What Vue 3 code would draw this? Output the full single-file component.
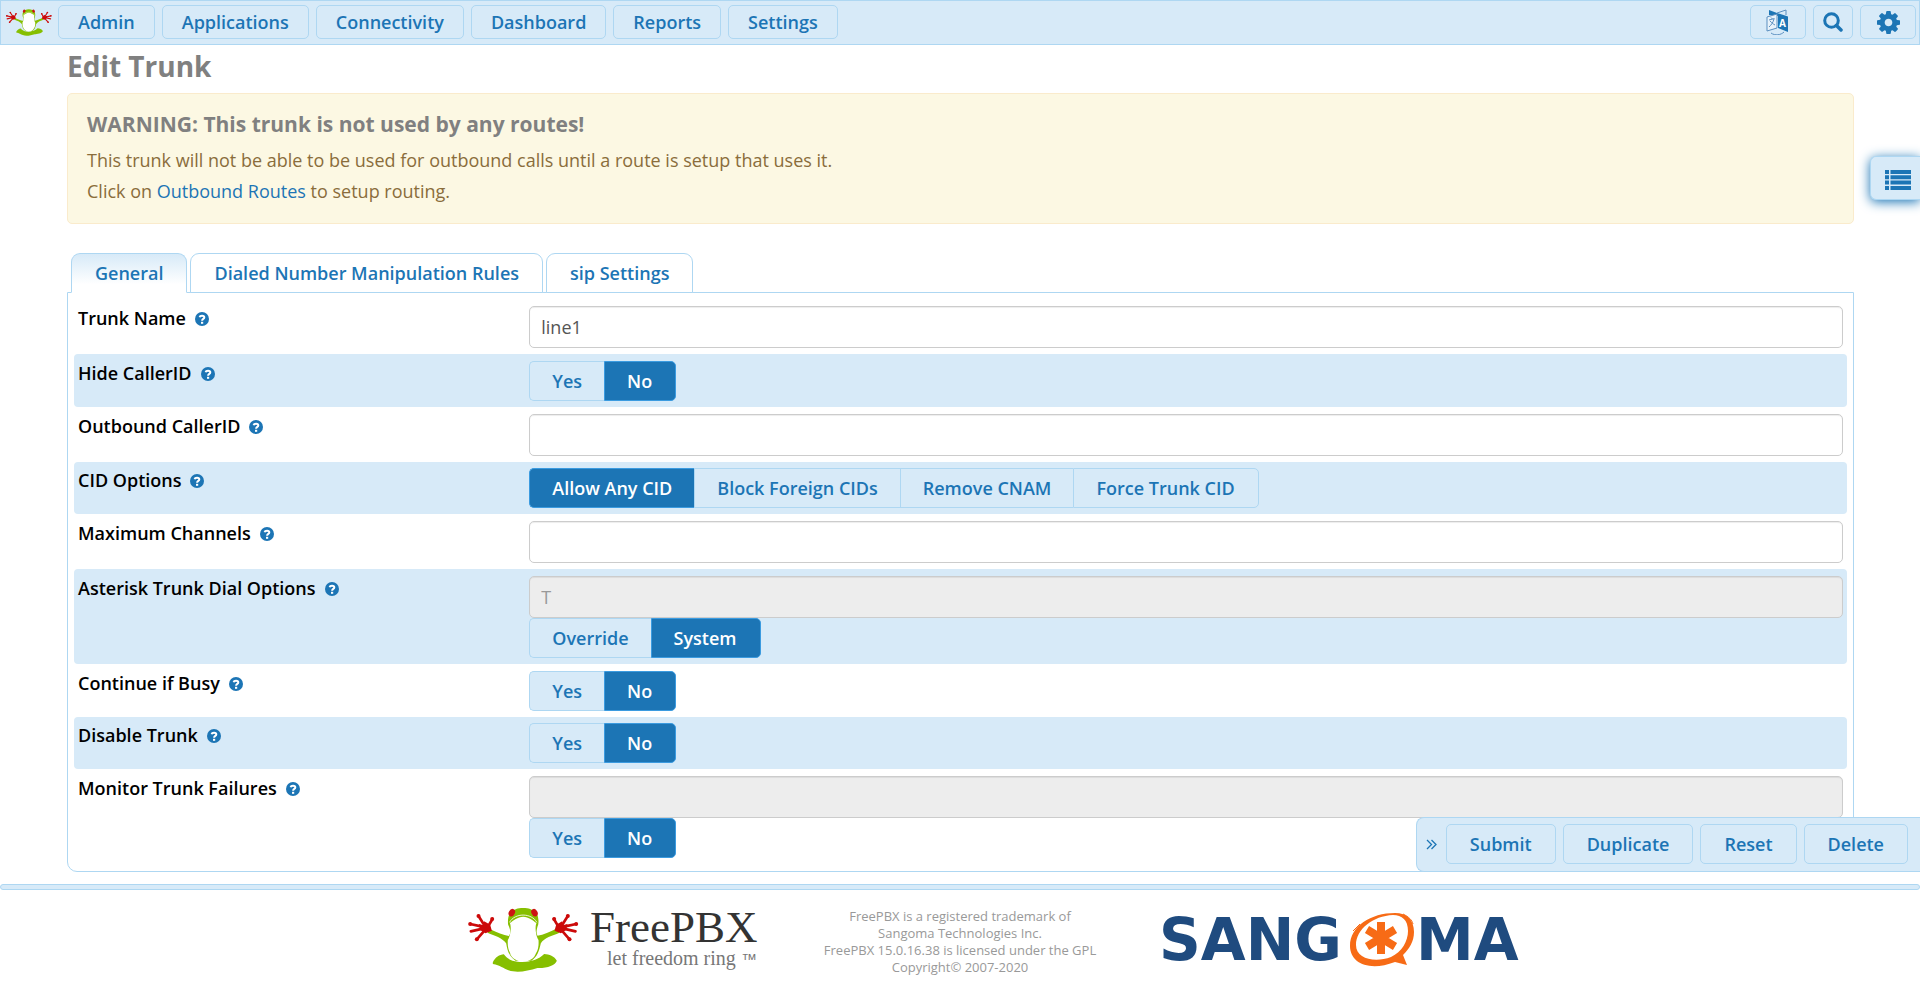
<script setup>
import { reactive, ref } from 'vue'

const menus = ['Admin', 'Applications', 'Connectivity', 'Dashboard', 'Reports', 'Settings']
const tabs = ['General', 'Dialed Number Manipulation Rules', 'sip Settings']
const activeTab = ref('General')
const actions = ['Submit', 'Duplicate', 'Reset', 'Delete']

const rows = reactive([
  { id: 'trunk-name', label: 'Trunk Name', text: 'line1' },
  { id: 'hide-cid', label: 'Hide CallerID', options: ['Yes', 'No'], choice: 'No' },
  { id: 'outbound-cid', label: 'Outbound CallerID', text: '' },
  {
    id: 'cid-options',
    label: 'CID Options',
    options: ['Allow Any CID', 'Block Foreign CIDs', 'Remove CNAM', 'Force Trunk CID'],
    choice: 'Allow Any CID'
  },
  { id: 'max-channels', label: 'Maximum Channels', text: '' },
  {
    id: 'dial-options',
    label: 'Asterisk Trunk Dial Options',
    text: 'T',
    disabled: true,
    options: ['Override', 'System'],
    choice: 'System'
  },
  { id: 'continue-busy', label: 'Continue if Busy', options: ['Yes', 'No'], choice: 'No' },
  { id: 'disable-trunk', label: 'Disable Trunk', options: ['Yes', 'No'], choice: 'No' },
  {
    id: 'monitor-failures',
    label: 'Monitor Trunk Failures',
    text: '',
    disabled: true,
    options: ['Yes', 'No'],
    choice: 'No'
  }
])
</script>

<template>
  <svg class="defs" aria-hidden="true">
    <symbol id="frog" viewBox="54 54 332 192">
      <path fill="#86bf00" d="M128 217C135 202 148 194 161 193C170 206 185 213 202 215C232 219 264 210 282 192C297 193 313 199 320 212C316 226 290 235 262 234C232 243 202 250 175 241C160 235 150 226 128 222Z" />
      <path fill="#86bf00" d="M174 104C171 85 178 57 194 59C206 52 232 52 244 59C260 57 268 85 264 104C258 120 258 130 262 137C280 134 300 125 318 116L328 128C305 138 283 142 272 160C266 185 262 200 244 212L196 212C178 200 172 185 168 160C155 142 135 138 112 128L120 118C140 128 160 136 176 138C182 130 182 120 174 104Z" />
      <path fill="#fff" d="M219 80C236 80 248 92 259 99C253 112 258 140 265 150C267 175 260 192 246 203L258 188C252 206 238 214 219 214C200 214 186 206 178 188L192 203C178 192 171 175 173 150C180 140 185 112 179 99C190 92 202 80 219 80Z" />
      <path fill="none" stroke="#fff" stroke-width="2.500" d="M178 97C194 68 244 68 260 97" />
      <ellipse cx="185" cy="68" rx="9" ry="12" transform="rotate(28 185 68)" fill="#cc1414" />
      <ellipse cx="253" cy="68" rx="9" ry="12" transform="rotate(-28 253 68)" fill="#cc1414" />
      <g id="frog-hand">
        <path fill="#cc0a0a" d="M86 102L100 106L102 94L120 104L125 122L106 130L90 120Z" />
        <path fill="none" stroke="#cc0a0a" stroke-width="8" stroke-linecap="round" d="M60 102L96 110M85 78L104 108M127 87L112 112M80 148L108 116M62 124L98 116" />
        <circle cx="60" cy="102" r="6" fill="#cc0a0a" /><circle cx="85" cy="78" r="6" fill="#cc0a0a" />
        <circle cx="126" cy="87" r="6" fill="#cc0a0a" /><circle cx="80" cy="148" r="6" fill="#cc0a0a" />
      </g>
      <use href="#frog-hand" transform="matrix(-1 0 0 1 438 0)" />
    </symbol>
    <symbol id="help" viewBox="0 0 14 14">
      <circle cx="7" cy="7" r="7" fill="#1c75b5" />
      <path fill="none" stroke="#fff" stroke-width="2" d="M4.600 5.300C5 3.200 9.300 3.200 9.300 5.500C9.300 7 7.100 6.900 7.100 8.700" />
      <path fill="#fff" d="M6 9.800h2.200v2H6z" />
    </symbol>
  </svg>

  <header class="topbar">
    <a class="brand" href="#" aria-label="FreePBX"><svg width="46" height="27"><use href="#frog" /></svg></a>
    <nav class="menu">
      <button v-for="m in menus" :key="m" type="button" class="btn menu-btn">{{ m }}</button>
    </nav>
    <div class="tools">
      <button type="button" class="btn tool wide" aria-label="Language">
        <svg width="24" height="26" viewBox="0 0 24 26">
          <path fill="#1c75b5" d="M3 1L11 4L22 7.500V23L12 19V7L3 6Z" />
          <path fill="#e8f2fa" stroke="#5b8fc0" stroke-width="1" d="M1 8L11 5V19L1 22Z" />
          <path fill="none" stroke="#5b8fc0" stroke-width="1" d="M11 4L20 1V6M5 24C9 27 15 26 18 23M3 11L8.500 9.500M5 8.500L6.500 10M8 10C7 14 5 16 3 18M4 12C6 14 7 15 9 16" />
          <text x="13" y="18" class="lang-letter">A</text>
        </svg>
      </button>
      <button type="button" class="btn tool" aria-label="Search">
        <svg width="20" height="20" viewBox="0 0 20 20">
          <circle cx="8.500" cy="8.500" r="6.800" fill="none" stroke="#1c75b5" stroke-width="3" />
          <path d="M13.500 13.500L18 18" stroke="#1c75b5" stroke-width="3.500" stroke-linecap="round" />
        </svg>
      </button>
      <button type="button" class="btn tool wide" aria-label="Preferences">
        <svg width="23" height="23" viewBox="0 -128 1536 1536">
          <path fill="#1c75b5" d="M1024 640q0-106-75-181t-181-75-181 75-75 181 75 181 181 75 181-75 75-181zm512-109v222q0 12-8 23t-20 13l-185 28q-19 54-39 91 35 50 107 138 10 12 10 25t-9 23q-27 37-99 108t-94 71q-12 0-26-9l-138-108q-44 23-91 38-16 136-29 186-7 28-36 28h-222q-14 0-24.500-8.500t-11.500-21.500l-28-184q-49-16-90-37l-141 107q-10 9-25 9-14 0-25-11-126-114-165-168-7-10-7-23 0-12 8-23 15-21 51-66.500t54-70.500q-27-50-41-99l-183-27q-13-2-21-12.500t-8-23.500v-222q0-12 8-23t19-13l186-28q14-46 39-92-40-57-107-138-10-12-10-24 0-10 9-23 26-36 98.500-107.500t94.500-71.500q13 0 26 10l138 107q44-23 91-38 16-136 29-186 7-28 36-28h222q14 0 24.500 8.500t11.500 21.500l28 184q49 16 90 37l142-107q9-9 24-9 13 0 25 10 129 119 165 170 7 8 7 22 0 12-8 23-15 21-51 66.500t-54 70.500q26 50 41 98l183 28q13 2 21 12.500t8 23.500z" />
        </svg>
      </button>
    </div>
  </header>

  <div class="page">
    <main class="content">
      <h1>Edit Trunk</h1>
      <section class="alert">
        <h2>WARNING: This trunk is not used by any routes!</h2>
        <p>This trunk will not be able to be used for outbound calls until a route is setup that uses it.</p>
        <p>Click on <a href="#">Outbound Routes</a> to setup routing.</p>
      </section>

      <div class="tabs" role="tablist">
        <button
          v-for="t in tabs"
          :key="t"
          type="button"
          role="tab"
          class="tab"
          :class="{ active: t === activeTab }"
          :aria-selected="t === activeTab"
          @click="activeTab = t"
        >{{ t }}</button>
      </div>

      <form class="panel" @submit.prevent>
        <div v-for="row in rows" :key="row.id" class="row">
          <div class="caption">
            <label v-if="row.text !== undefined" :for="row.id">{{ row.label }}</label>
            <span v-else :id="row.id + '-label'">{{ row.label }}</span>
            <svg class="help" width="14" height="14"><use href="#help" /></svg>
          </div>
          <div class="control">
            <input
              v-if="row.text !== undefined"
              :id="row.id"
              v-model="row.text"
              class="field"
              type="text"
              :disabled="row.disabled"
            />
            <div v-if="row.options" class="group" role="radiogroup" :aria-label="row.label">
              <label v-for="o in row.options" :key="o" class="option" :class="{ on: row.choice === o }">
                <input v-model="row.choice" type="radio" :name="row.id" :value="o" />{{ o }}
              </label>
            </div>
          </div>
        </div>
      </form>
    </main>

    <div class="actions">
      <button type="button" class="collapse" aria-label="Collapse">
        <svg width="11" height="11" viewBox="0 0 11 11">
          <path fill="none" stroke="#1c75b5" stroke-width="1.300" d="M1 1L5.500 5.500L1 10M5.500 1L10 5.500L5.500 10" />
        </svg>
      </button>
      <button v-for="a in actions" :key="a" type="button" class="btn action">{{ a }}</button>
    </div>
  </div>

  <button type="button" class="side-tab" aria-label="Trunk list">
    <svg width="26" height="20" viewBox="0 0 26 20">
      <path fill="#1c75b5" d="M0 0h4v4H0zM0 5.300h4v4H0zM0 10.600h4v4H0zM0 16h4v4H0zM5.500 0H26v4H5.500zM5.500 5.300H26v4H5.500zM5.500 10.600H26v4H5.500zM5.500 16H26v4H5.500z" />
    </svg>
  </button>

  <footer class="footer">
    <div class="rule"></div>
    <div class="footer-body">
      <svg class="freepbx" width="293" height="76" viewBox="0 -8 293 76" role="img">
        <use href="#frog" x="0" y="0" width="111" height="64" />
        <text x="122" y="34" class="fp-name">FreePBX</text>
        <text x="139" y="57" class="fp-tag">let freedom ring</text>
        <text x="273" y="57" class="fp-tm">™</text>
      </svg>
      <p class="legal">
        FreePBX is a registered trademark of<br />Sangoma Technologies Inc.<br />FreePBX 15.0.16.38 is
        licensed under the GPL<br />Copyright© 2007-2020
      </p>
      <svg class="sangoma" width="370" height="76" viewBox="2 -11 370 76" role="img">
        <text x="2" y="49" class="sg">SANG</text>
        <text x="259" y="49" class="sg">MA</text>
        <path fill="#f76b16" fill-rule="evenodd" d="M238 2C250 2 257 9 257 21C257 31 252 38 246 44L250 54L238 51C212 61 193 52 193 35C193 15 214 2 238 2ZM236 4C216 5 199 18 199 34C199 48 218 52 234 46C245 41 251 30 251 20C251 9 245 4 236 4Z" />
        <path fill="none" stroke="#f76b16" stroke-width="1" d="M196 20L203 13M246 3C252 6 255 9 256 13" />
        <path stroke="#f76b16" stroke-width="8" d="M224 11V43M210 18.500L238 35.500M238 18.500L210 35.500" />
      </svg>
    </div>
  </footer>
</template>

<style>
body {
  margin: 0;
  background: #fff;
  font-family: "Open Sans", "Noto Sans", sans-serif;
  font-size: 18px;
  line-height: 26px;
}
</style>

<style scoped>
.defs {
  position: absolute;
  width: 0;
  height: 0;
}
button,
input {
  font: inherit;
}
.topbar {
  display: flex;
  align-items: flex-start;
  box-sizing: border-box;
  height: 45px;
  padding: 4px 3px 0 5px;
  background: #d7eaf8;
  border: 1px solid #aed7f2;
}
.brand {
  display: flex;
  align-items: center;
  height: 34px;
  margin-right: 6px;
}
.menu,
.tools {
  display: flex;
  gap: 7px;
}
.tools {
  margin-left: auto;
}
.btn {
  display: flex;
  align-items: center;
  justify-content: center;
  box-sizing: border-box;
  background: #d7eaf8;
  border: 1px solid #aed7f2;
  border-radius: 5px;
  color: #1c75b5;
  font-weight: 600;
}
.menu-btn {
  height: 34px;
  padding: 0 19px;
}
.tool {
  width: 40px;
  height: 34px;
  padding: 0;
}
.tool.wide {
  width: 56px;
}
.lang-letter {
  font: bold 10px "Open Sans", sans-serif;
  fill: #fff;
}
.page {
  position: relative;
}
.content {
  padding: 0 66px 0 67px;
}
h1 {
  margin: 0;
  padding: 5px 0 11px;
  color: #808080;
  font-size: 28px;
  line-height: 32px;
}
.alert {
  padding: 17px 19px 16px;
  background: #fcf8e3;
  border: 1px solid #faebcc;
  border-radius: 5px;
  color: #8a6d3b;
}
.alert h2 {
  margin: 0 0 8px;
  color: #808080;
  font-size: 21px;
  line-height: 26px;
}
.alert p {
  margin: 0;
  line-height: 31px;
}
a {
  color: #1c75b5;
  text-decoration: none;
}
.tabs {
  display: flex;
  gap: 3px;
  margin-top: 29px;
  padding-left: 4px;
}
.tab {
  position: relative;
  z-index: 1;
  height: 40px;
  margin-bottom: -1px;
  padding: 0 23px;
  background: #fff;
  border: 1px solid #aed7f2;
  border-radius: 9px 9px 0 0;
  color: #1c75b5;
  font-weight: 600;
}
.tab.active {
  background: linear-gradient(#d7eaf8, #fff 80%);
  border-bottom-color: #fff;
}
.panel {
  padding: 6px 6px 7px;
  border: 1px solid #aed7f2;
  border-radius: 0 0 10px 10px;
}
.row {
  display: grid;
  grid-template-columns: 25% 1fr;
  column-gap: 10px;
  padding: 7px 4px 6px;
  border-radius: 4px;
}
.row:nth-child(even) {
  background: #d7eaf8;
}
.row:nth-child(4n) {
  padding-top: 6px;
}
.caption {
  color: #000;
  font-weight: 600;
  line-height: 24px;
}
.help {
  margin-left: 9px;
  vertical-align: -1px;
}
.field {
  display: block;
  box-sizing: border-box;
  width: 100%;
  height: 42px;
  padding: 0 11px;
  background: #fff;
  border: 1px solid #ccc;
  border-radius: 5px;
  box-shadow: inset 0 1px 1px rgba(0, 0, 0, 0.075);
  color: #555;
}
.field:disabled {
  background: #ededed;
  color: #999;
}
.group {
  display: flex;
}
.option {
  box-sizing: border-box;
  height: 40px;
  padding: 0 22px;
  background: #d7eaf8;
  border: 1px solid #aed7f2;
  border-right-width: 0;
  color: #1c75b5;
  font-weight: 600;
  line-height: 38px;
}
.option:first-child {
  border-radius: 5px 0 0 5px;
}
.option:last-child {
  padding-right: 23px;
  border-right-width: 1px;
  border-radius: 0 5px 5px 0;
}
.option.on {
  background: #1c75b5;
  border-color: #3b9be0;
  color: #fff;
}
.option input {
  position: absolute;
  opacity: 0;
  pointer-events: none;
}
.actions {
  position: absolute;
  right: 0;
  bottom: 0;
  display: flex;
  gap: 7px;
  box-sizing: border-box;
  height: 55px;
  padding: 6px 12px 0 8px;
  background: #d7eaf8;
  border: 1px solid #aed7f2;
  border-right: 0;
  border-radius: 8px 0 0 8px;
}
.collapse {
  display: flex;
  align-items: center;
  height: 40px;
  padding: 0 2px 0 1px;
  background: none;
  border: 0;
}
.action {
  height: 40px;
  padding: 0 23px;
}
.side-tab {
  position: absolute;
  top: 156px;
  right: 0;
  display: flex;
  align-items: center;
  width: 50px;
  height: 44px;
  padding: 4px 0 0 14px;
  background: #d7eaf8;
  border: 1px solid #aed7f2;
  border-right: 0;
  border-radius: 6px 0 0 6px;
  box-shadow: 0 2px 12px #1c75b5;
}
.rule {
  box-sizing: border-box;
  height: 6px;
  margin-top: 12px;
  background: #d7eaf8;
  border: 1px solid #aed7f2;
  border-radius: 3px;
}
.footer-body {
  display: grid;
  grid-template-columns: 1fr 326px 1fr;
  column-gap: 36px;
  align-items: start;
  padding: 10px 0;
}
.freepbx {
  justify-self: end;
}
.legal {
  margin: 8px 0 0;
  color: #999;
  font-size: 13px;
  line-height: 17px;
  text-align: center;
}
.fp-name {
  font: 45px "Liberation Serif", serif;
  fill: #333;
}
.fp-tag {
  font: 20px "Liberation Serif", serif;
  fill: #777;
}
.fp-tm {
  font: 16px "Liberation Sans", sans-serif;
  fill: #777;
}
.sg {
  font: bold 58px "DejaVu Sans", sans-serif;
  fill: #1f4b7f;
}
</style>
